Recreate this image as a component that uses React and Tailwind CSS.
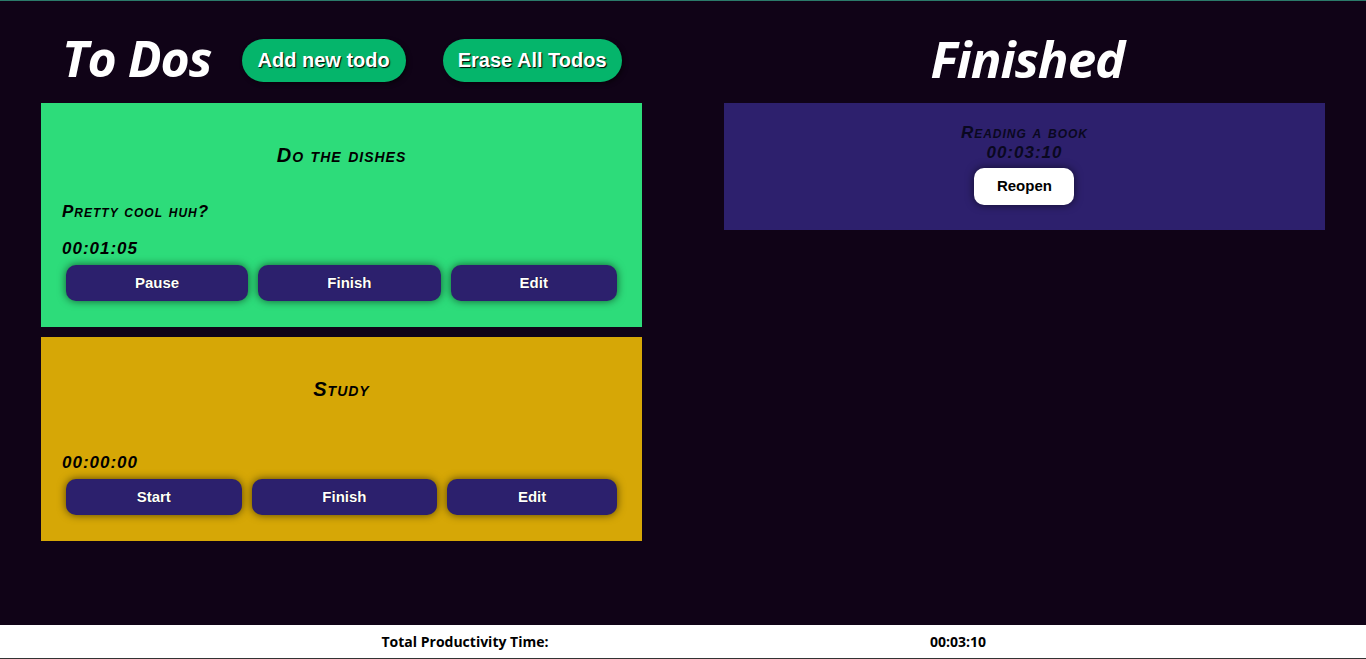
import React from 'react';

const todos = [
  { title: 'Do the dishes', description: 'Pretty cool huh?', time: '00:01:05', running: true, color: 'bg-[#2ddc7a]' },
  { title: 'Study', description: '', time: '00:00:00', running: false, color: 'bg-[#d6a706]' },
];

const finished = [{ title: 'Reading a book', time: '00:03:10' }];

const headFont = { fontFamily: '"Open Sans", sans-serif' };

function TodoCard({ todo }) {
  return (
    <div className={`${todo.color} flex flex-col px-[21px] pt-[40px] pb-[26px] text-black`}>
      <h3 className="text-center text-[20px] leading-[24px] font-bold italic tracking-[1px] [font-variant:small-caps]">
        {todo.title}
      </h3>
      <p className="mt-[35px] mb-[17px] text-[17px] leading-[20px] font-bold italic tracking-[1px] [font-variant:small-caps]">
        {todo.description}
      </p>
      <p className="text-[17px] leading-[20px] font-bold italic tracking-[1px]">{todo.time}</p>
      <div className="mx-[4px] mt-[6px] flex gap-[10px]">
        {[todo.running ? 'Pause' : 'Start', 'Finish', 'Edit'].map((label) => (
          <button
            key={label}
            className="h-[36px] flex-auto rounded-[10px] bg-[#2c206d] px-4 text-[15px] font-bold text-white shadow-[0_0_8px_rgba(0,0,0,0.6)] [text-shadow:0_0_1px_#000]"
          >
            {label}
          </button>
        ))}
      </div>
    </div>
  );
}

function App() {
  return (
    <div
      className="flex min-h-screen flex-col border-t border-[#2b7a6a] bg-[#100317]"
      style={{ fontFamily: '"Liberation Sans", Arial, sans-serif' }}
    >
      <div className="flex flex-1 pt-[16px]">
        <div className="mx-[3%] w-[44%]">
          <div className="flex h-[86px] items-center pl-[21px]">
            <h1 className="-mt-[4px] text-[50px] font-bold italic tracking-[-1px] text-white" style={headFont}>
              To Dos
            </h1>
            <button className="ml-[30px] h-[43px] rounded-full bg-[#05b56b] px-4 text-[20px] font-bold text-white shadow-[2px_2px_4px_rgba(0,0,0,0.5)] [text-shadow:1px_1px_1px_#000]">
              Add new todo
            </button>
            <button className="ml-[37px] h-[43px] rounded-full bg-[#05b56b] px-[15px] text-[20px] font-bold text-white shadow-[2px_2px_4px_rgba(0,0,0,0.5)] [text-shadow:1px_1px_1px_#000]">
              Erase All Todos
            </button>
          </div>
          <div className="flex flex-col gap-[10px]">
            {todos.map((t) => (
              <TodoCard key={t.title} todo={t} />
            ))}
          </div>
        </div>

        <div className="mx-[3%] w-[44%]">
          <div className="flex h-[86px] items-center justify-center">
            <h1 className="-mt-[4px] ml-[6px] text-[51px] font-bold italic tracking-[-1px] text-white" style={headFont}>
              Finished
            </h1>
          </div>
          {finished.map((f) => (
            <div key={f.title} className="flex flex-col items-center bg-[#2d206d] pt-[20px] pb-[25px] text-[#0a0820]">
              <h3 className="text-[17px] leading-[20px] font-bold italic tracking-[1px] [font-variant:small-caps]">
                {f.title}
              </h3>
              <p className="text-[17px] leading-[20px] font-bold italic tracking-[1px]">{f.time}</p>
              <button className="mt-[5px] h-[37px] w-[100px] rounded-[10px] bg-white text-[15px] font-bold text-black shadow-[0_0_8px_rgba(0,0,0,0.6)]">
                Reopen
              </button>
            </div>
          ))}
        </div>
      </div>

      <div className="flex h-[34px] items-center border-b border-[#333] bg-white text-[14px] font-bold text-black" style={{ fontFamily: '"Open Sans", sans-serif' }}>
        <div className="w-[930px] text-center">Total Productivity Time:</div>
        <div className="w-[56px] text-center whitespace-nowrap">00:03:10</div>
      </div>
    </div>
  );
}

export default App;
